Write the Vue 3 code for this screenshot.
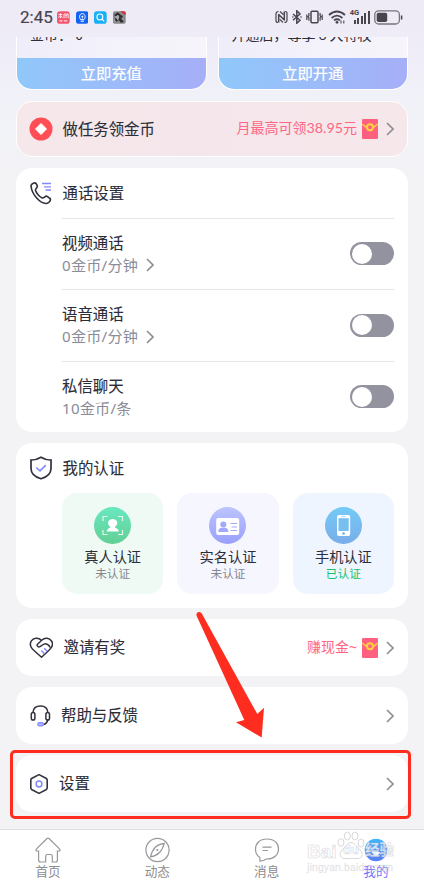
<script setup>
const rates = [
  { name: '视频通话', price: '0金币/分钟', arrow: true },
  { name: '语音通话', price: '0金币/分钟', arrow: true },
  { name: '私信聊天', price: '10金币/条', arrow: false },
]
const signalBars = [4, 6, 8, 11, 13]
</script>

<template>
  <div class="phone">
    <header class="status">
      <span class="time">2:45</span>
      <div class="apps">
        <svg class="app" viewBox="0 0 13 13"><rect width="13" height="13" rx="3" fill="#f4546f" /><path d="M1.500 3.500h4M3.500 2.200v5M1.600 6.800l1-1.800M5.400 6.800l-1-1.800M7.200 3h4.200v4.300M7.200 3v4.300M8.400 4.600h2M8.600 6.200h1.700" fill="none" stroke="#fff" stroke-width=".9" /><path d="M2.500 10h3.200M7 10h3.500" stroke="#fff" stroke-width="1" /></svg>
        <svg class="app" viewBox="0 0 13 13"><rect width="13" height="13" rx="3" fill="#1263f5" /><path d="M4.800 8.700C2.600 6 3.800 2.500 6.500 2.500s3.900 3.500 1.700 6.200zM4.800 10.300h3.400" fill="none" stroke="#fff" stroke-width="1" /><path d="M6.500 4.600v3M5.500 5.600h2" stroke="#fff" stroke-width=".9" /></svg>
        <svg class="app" viewBox="0 0 13 13"><rect width="13" height="13" rx="3" fill="#18aef8" /><circle cx="6" cy="6" r="3" fill="none" stroke="#fff" stroke-width="1.100" /><path d="M8.200 8.200 10.500 10.500" stroke="#fff" stroke-width="1.200" /></svg>
        <svg class="app" viewBox="0 0 13 13"><rect width="13" height="13" rx="2" fill="#8a8a8a" /><path d="M1 4l4-3 3 3 2 1-1 3 2 3-3 1-2-3-3 2-1-3 2-2z" fill="#302e30" /><path d="M3 6l2-2 1 2-1 3zM1 9l2 2M8 7l2 2" fill="#aaa" stroke="#ddd" stroke-width=".5" /><path d="M7.500 0H11a2 2 0 0 1 2 2v2L11 3z" fill="#d92c37" /></svg>
      </div>
      <div class="system">
        <svg width="13" height="14" viewBox="0 0 13 14"><path d="M3.700 12.500V4.500L9.300 10V1.500" fill="none" stroke="#48454d" stroke-width="1.500" stroke-linejoin="round" /><path d="M3.500 1.500Q1 1.500 1 4V10.500Q1 12.500 3 12.500M5 1.500L8.500 4.700M4.800 9.300L8 12.500M9.500 12.500Q12 12.500 12 10V3.500Q12 1.500 10 1.500" fill="none" stroke="#48454d" stroke-width="1.200" /></svg>
        <svg width="10" height="14" viewBox="0 0 10 14"><path d="M1 4l7 6.200-3.200 3V.8L8 4 1 10.200" fill="none" stroke="#48454d" stroke-width="1.500" /><circle cx=".9" cy="7" r=".8" fill="#48454d" /><circle cx="9" cy="7" r=".8" fill="#48454d" /></svg>
        <svg width="17" height="14" viewBox="0 0 17 14"><rect x="5" y="1.200" width="7" height="11.600" rx="1" fill="none" stroke="#48454d" stroke-width="1.500" /><path d="M2.900 3v2.500l-.7 1 .7 1.200v3M14.100 3v2.500l.7 1-.7 1.200v3M.8 4.500v2l.5.500-.5.500V10M16.200 4.500v2l-.5.500.5.500V10" fill="none" stroke="#48454d" stroke-width="1.200" /></svg>
        <svg width="18" height="14" viewBox="0 0 18 14"><path d="M1 5q8-7 16 0M3.600 8q5.400-4.700 10.800 0M6 10.400q3-2.400 6 0" fill="none" stroke="#48454d" stroke-width="1.800" /><circle cx="9" cy="12.300" r="1.400" fill="#48454d" /><path d="M13 10.500v3M15.800 10.500v3" stroke="#48454d" stroke-width="1.100" /></svg>
        <div class="signal">
          <span class="gen">4G</span>
          <i v-for="h in signalBars" :key="h" class="bar" :style="{ height: h + 'px' }"></i>
        </div>
        <svg width="29" height="15" viewBox="0 0 29 15"><rect x=".8" y=".8" width="24.600" height="13.200" rx="3.800" fill="none" stroke="#77747c" stroke-width="1.300" /><rect x="2.700" y="2.700" width="10.500" height="9.400" rx="1.800" fill="#48454d" /><path d="M27.600 5.500v4" stroke="#48454d" stroke-width="1.500" /></svg>
      </div>
    </header>

    <main class="content">
      <section class="wallets">
        <div class="wallet"><p class="wallet-info">金币：&nbsp;0</p><button class="wallet-btn">立即充值</button></div>
        <div class="wallet"><p class="wallet-info">开通后，尊享 8 大特权</p><button class="wallet-btn">立即开通</button></div>
      </section>

      <section class="card row task">
        <svg class="lead" width="24" height="24" viewBox="0 0 24 24"><circle cx="12" cy="12" r="11.500" fill="#ff4e55" /><path d="M12 6.500 17.500 12 12 17.500 6.500 12z" fill="#fff" stroke="#fff" stroke-linejoin="round" /></svg>
        <span class="title">做任务领金币</span>
        <span class="promo">月最高可领<b class="num">38.95</b>元</span>
        <svg class="packet" viewBox="0 0 16 20"><rect width="16" height="20" rx="1.200" fill="#ff6080" /><path d="M.3 5 4 8h1.500M15.700 5 12 8h-1.500" fill="none" stroke="#ffd23f" stroke-width="1.400" /><circle cx="8" cy="8.300" r="3" fill="none" stroke="#ffd23f" stroke-width="2" /></svg>
        <svg class="chev" viewBox="0 0 8 14"><path d="M1 1l6 6-6 6" /></svg>
      </section>

      <section class="card calls">
        <div class="head">
          <svg class="lead" width="24" height="24" viewBox="0 0 24 24"><path d="M2 4.500C3 2.200 5.500 1.300 7 2.300L8.300 4.800C9 6.300 6.200 7.500 6.500 9.200C7.200 12 10.500 15.800 13.200 17C15 17.600 16 14.800 17.800 15.200L20.400 17C22.800 18.500 20.500 22 17.500 22.500C11.500 23 2.500 13.500 2 4.500Z" fill="none" stroke="#30323d" stroke-width="1.600" /><path d="M13 2.500h9M15 5.800h7M16.500 9H22" stroke="#8388ff" stroke-width="1.300" /></svg>
          <span class="title">通话设置</span>
        </div>
        <div v-for="r in rates" :key="r.name" class="rate">
          <div class="rate-text">
            <span class="title">{{ r.name }}</span>
            <span class="price">{{ r.price }}<svg v-if="r.arrow" class="chev small" viewBox="0 0 8 14"><path d="M1 1l6 6-6 6" /></svg></span>
          </div>
          <div class="toggle"><i class="knob"></i></div>
        </div>
      </section>

      <section class="card auth">
        <div class="head">
          <svg class="lead" width="24" height="24" viewBox="0 0 24 24"><path d="M12 1.200Q7 4.200 2 4V12.500C2 18 7 21.300 12 22.800C17 21.300 22 18 22 12.500V4Q17 4.200 12 1.200Z" fill="none" stroke="#30323d" stroke-width="1.700" /><path d="M7.200 11.500 11 14.800 16.800 9.200" fill="none" stroke="#8388ff" stroke-width="1.600" /></svg>
          <span class="title">我的认证</span>
        </div>
        <div class="badges">
          <div class="badge green">
            <svg class="disc" viewBox="0 0 37 37"><defs><linearGradient id="dg" x2="0" y2="1"><stop stop-color="#68e8c0" /><stop offset="1" stop-color="#62cf94" /></linearGradient></defs><circle cx="18.500" cy="18.500" r="18.500" fill="url(#dg)" /><path d="M9 14V9.500h4.500M24 9.500h4.500V14M28.500 23v4.500H24M13.500 27.500H9V23" fill="none" stroke="#fff" stroke-opacity=".8" stroke-width="1.200" /><path d="M16.600 20C11.800 16.500 14.500 11.900 18.700 11.900S25.500 16.500 20.800 20C21 21 24.700 21.500 24.700 24.500H12.700C12.700 21.500 16.500 21 16.600 20Z" fill="#fff" /></svg>
            <span class="badge-name">真人认证</span><span class="badge-state">未认证</span>
          </div>
          <div class="badge violet">
            <svg class="disc" viewBox="0 0 37 37"><defs><linearGradient id="dv" x2="0" y2="1"><stop stop-color="#bcc4ff" /><stop offset="1" stop-color="#9aa0fb" /></linearGradient></defs><circle cx="18.500" cy="18.500" r="18.500" fill="url(#dv)" /><rect x="7.200" y="11" width="23" height="17" rx="2" fill="#fff" /><circle cx="14.300" cy="17.500" r="3" fill="#a2a9fd" /><path d="M9.300 25c0-4 2-4.300 5-4.300s5 .3 5 4.300z" fill="#a2a9fd" /><path d="M21.500 16.500H28M22.500 20H28M21.500 23.500H28" stroke="#a2a9fd" stroke-width="1" /></svg>
            <span class="badge-name">实名认证</span><span class="badge-state">未认证</span>
          </div>
          <div class="badge blue">
            <svg class="disc" viewBox="0 0 37 37"><defs><linearGradient id="db" x2="0" y2="1"><stop stop-color="#74caf6" /><stop offset="1" stop-color="#79ade9" /></linearGradient></defs><circle cx="18.500" cy="18.500" r="18.500" fill="url(#db)" /><rect x="12" y="8" width="13.200" height="21" rx="2" fill="#fff" /><rect x="13.500" y="11.200" width="10.200" height="12.800" fill="#77bff0" /><path d="M16.500 9.600h4" stroke="#9accf1" stroke-width=".8" /><circle cx="18.600" cy="26.500" r="1.300" fill="#67acec" /></svg>
            <span class="badge-name">手机认证</span><span class="badge-state ok">已认证</span>
          </div>
        </div>
      </section>

      <section class="card row invite">
        <svg class="lead" width="24" height="24" viewBox="0 0 24 24"><path d="M12.500 4.300C9 .8 4.200 1.900 2.200 5.200C.2 8.700 2 12 5.300 14.800L12.500 21.300L20 14.300C23.500 11.200 24.500 8 22.500 5C20.500 1.900 15.800 1.200 13 4L8.500 8.200C7.500 9.300 8.700 11.300 10.500 10.800C13.200 9.900 14.500 7.300 16.500 7.700C18.500 8 20.500 10 21.300 11.500" fill="none" stroke="#30323d" stroke-width="1.500" stroke-linejoin="round" /><path d="M12.300 14.500l3 3M15.200 12.300l3 3" stroke="#8388ff" stroke-width="1.400" /></svg>
        <span class="title">邀请有奖</span>
        <span class="promo">赚现金~</span>
        <svg class="packet" viewBox="0 0 16 20"><rect width="16" height="20" rx="1.200" fill="#ff6080" /><path d="M.3 5 4 8h1.500M15.700 5 12 8h-1.500" fill="none" stroke="#ffd23f" stroke-width="1.400" /><circle cx="8" cy="8.300" r="3" fill="none" stroke="#ffd23f" stroke-width="2" /></svg>
        <svg class="chev" viewBox="0 0 8 14"><path d="M1 1l6 6-6 6" /></svg>
      </section>

      <section class="card row help">
        <svg class="lead" width="22" height="24" viewBox="0 0 22 24"><path d="M4 8.500C4.200 4 7 2 11.500 2S18.500 4 18.900 8.500M18.900 15.500Q18 19.800 14.300 20.500" fill="none" stroke="#30323d" stroke-width="1.500" /><rect x="2.300" y="8.500" width="3.600" height="7.500" rx="1.800" fill="none" stroke="#30323d" stroke-width="1.500" /><rect x="16.900" y="8.500" width="3.600" height="7.500" rx="1.800" fill="none" stroke="#30323d" stroke-width="1.500" /><rect x="8.800" y="18.700" width="5.500" height="3.200" rx="1.600" fill="#b4b8ff" stroke="#8388ff" stroke-width="1.200" /></svg>
        <span class="title">帮助与反馈</span>
        <svg class="chev" viewBox="0 0 8 14"><path d="M1 1l6 6-6 6" /></svg>
      </section>

      <section class="card row settings">
        <svg class="lead" width="20" height="24" viewBox="0 0 20 24"><path d="M10 2.600 17 6.300Q18.200 7 18.200 8.200V15.800Q18.200 17 17 17.700L10 21.400 3 17.700Q1.800 17 1.800 15.800V8.200Q1.800 7 3 6.300Z" fill="none" stroke="#30323d" stroke-width="1.600" stroke-linejoin="round" /><circle cx="10" cy="12" r="2.900" fill="none" stroke="#8388ff" stroke-width="1.500" /></svg>
        <span class="title">设置</span>
        <svg class="chev" viewBox="0 0 8 14"><path d="M1 1l6 6-6 6" /></svg>
      </section>
    </main>

    <nav class="tabs">
      <a class="tab"><svg class="tab-icon" viewBox="0 0 28 28"><path d="M14 2.200Q14.700 2.200 15.500 3L25.500 12.800Q27 15 24.500 15H23.400V24Q23.400 26 21.400 26H18.300V20.200Q18.300 18.500 16.700 18.500H13.300Q11.700 18.500 11.700 20.200V26H6.600Q4.600 26 4.600 24V15H3.500Q1 15 2.500 12.800L12.500 3Q13.300 2.200 14 2.200Z" /></svg>首页</a>
      <a class="tab"><svg class="tab-icon" viewBox="0 0 28 28"><circle cx="14.500" cy="14" r="11.600" /><path d="M21.300 7.300Q19.500 13.500 16.500 16.500Q13 20 7.500 20.800Q9 14.500 12.500 11Q16 7.800 21.300 7.300Z" /><circle cx="14.400" cy="14" r=".5" /></svg>动态</a>
      <a class="tab"><svg class="tab-icon" viewBox="0 0 28 28"><path d="M14 3C6.500 3 2.500 7.500 2.500 13.200C2.500 17 4.200 19.700 6.800 21.500L7 25.200Q10.500 24.800 13.500 23C21 23.200 25.500 18.800 25.500 13S21.500 3 14 3Z" /><path d="M9.500 11.200h9M9.500 14.500h5.500" /></svg>消息</a>
      <a class="tab active"><svg class="tab-icon" viewBox="0 0 28 28"><defs><linearGradient id="me" x2="0" y2="1"><stop stop-color="#42b6fb" /><stop offset="1" stop-color="#597df8" /></linearGradient></defs><circle cx="14" cy="14" r="11.300" fill="url(#me)" stroke="none" /><path d="M9.500 16q4.500 7 9 0z" fill="#fff" stroke="none" /></svg>我的</a>
    </nav>

    <div class="mark">
      <svg class="paw" width="28" height="30" viewBox="0 0 28 30"><ellipse cx="4" cy="11.500" rx="3" ry="3.800" /><ellipse cx="10.300" cy="5" rx="3" ry="4" /><ellipse cx="18" cy="5" rx="3" ry="4" /><ellipse cx="24" cy="12" rx="3" ry="4" /><path d="M14 11.500C10 11.500 9 16 5 19C1 23 4 28 8 27.500H20C25 28 27 23 23 19C19 16 18 11.500 14 11.500Z" /></svg>
      <span class="mark-bai">Bai</span><span class="mark-du">du</span><span class="mark-jy">经验</span>
      <span class="mark-url">jingyan.baidu.com</span>
    </div>
    <div class="focus"></div>
    <svg class="pointer" width="70" height="130" viewBox="0 0 70 130"><path d="M.6 4.800Q-.2 1.700 2.500 1Q4.700.6 5.900 2.800L61.300 103 68 96.700 65.700 126.500 40 111.300 48.300 109Z" fill="#fe2d20" /></svg>
  </div>
</template>

<style>
body { background: #f3f3f6; overflow: hidden; }
</style>

<style scoped>
.phone { position: relative; width: 424px; height: 885px; display: flex; flex-direction: column; overflow: hidden; font-family: "Noto Sans", "Noto Sans CJK SC", sans-serif; color: #2b2d38; background: linear-gradient(180deg, #eeeaf6 0, #efedf8 50px, #f1f2f8 110px, #f3f3f6 180px); }
.status { flex: none; height: 37px; box-sizing: border-box; padding: 0 21px 3px 20px; display: flex; align-items: center; }
.time { width: 37px; font: 400 17px/20px Roboto, sans-serif; color: #48454d; -webkit-text-stroke: .2px; }
.apps { display: flex; gap: 6px; }
.app { display: block; width: 12.700px; height: 13px; }
.system { margin-left: auto; display: flex; align-items: center; gap: 4.200px; }
.system svg { display: block; }
.signal { position: relative; width: 20px; height: 14px; display: flex; align-items: flex-end; justify-content: flex-end; gap: 1.500px; }
.bar { width: 2px; background: #48454d; }
.gen { position: absolute; left: 0; top: -1px; font: 700 7.500px/8px Roboto, sans-serif; color: #48454d; }
.content { flex: 1; min-height: 0; padding: 0 16px; }
.wallets { display: grid; grid-template-columns: 1fr 1fr; gap: 11px; height: 52.500px; overflow: hidden; margin-bottom: 11.500px; }
.wallet { box-sizing: border-box; height: 52.500px; border: 1px solid #fff; border-top: 0; border-radius: 0 0 16px 16px; overflow: hidden; background: linear-gradient(90deg, #efedf9, #f7f5fb); display: flex; flex-direction: column; justify-content: flex-end; }
.wallet-info { flex: none; margin: 0 0 13px; height: 22px; line-height: 22px; padding-left: 13px; font-size: 14px; font-family: "Noto Sans CJK SC", sans-serif; white-space: nowrap; }
.wallet-btn { flex: none; height: 31px; border: 0; padding: 0 0 2px; background: linear-gradient(90deg, #90c8fa, #a6aff8); color: #fff; font: 400 15.300px/29px "Noto Sans CJK SC", sans-serif; -webkit-text-stroke: .2px; }
.card { box-sizing: border-box; background: #fff; border-radius: 16px; margin-bottom: 11px; }
.row { height: 57px; display: flex; align-items: center; padding: 0 14px 0 13px; }
.task { height: 56px; border: 1px solid #fff; padding: 0 13px 0 12px; margin-bottom: 10.500px; background: linear-gradient(90deg, #f6e7ea, #f4e6ea 45%, #f5e7ea); }
.lead { flex: none; display: block; }
.title { font-size: 15.400px; line-height: 22px; -webkit-text-stroke: .1px; white-space: nowrap; font-family: "Noto Sans CJK SC", sans-serif; }
.row .title { margin-left: 9.500px; padding-bottom: 3px; }
.head .title { padding-bottom: 2px; }
.invite .title { margin-left: 10.500px; }
.promo { margin-left: auto; padding-bottom: 2px; color: #ff6683; font-size: 14px; line-height: 20px; white-space: nowrap; }
.num { font: 400 14.300px/20px Lato, sans-serif; }
.packet { width: 16px; height: 20px; margin-left: 5px; flex: none; }
.chev { width: 8px; height: 14px; margin-left: 8px; flex: none; }
.chev path { fill: none; stroke: #8d8d92; stroke-width: 1.600; }
.help .chev, .settings .chev { margin-left: auto; }
.calls { height: 264.500px; padding: 13px 14px 0 13px; margin-bottom: 10.500px; }
.head { height: 24px; display: flex; align-items: center; gap: 9.500px; }
.rate { margin-left: 33px; height: 71.500px; box-sizing: border-box; border-top: 1px solid #e5e5e8; display: flex; justify-content: space-between; align-items: center; }
.head + .rate { margin-top: 13px; }
.rate-text { display: flex; flex-direction: column; }
.price { display: flex; align-items: center; font-size: 15.100px; letter-spacing: .25px; line-height: 23px; padding-top: 1px; color: #8b8c98; font-family: "Noto Sans", "Noto Sans CJK SC", sans-serif; }
.toggle { box-sizing: border-box; width: 44px; height: 23px; border-radius: 12px; background: #9393a0; padding: 1.500px; }
.knob { display: block; width: 20px; height: 20px; border-radius: 50%; background: #fff; }
.auth { height: 165.500px; padding: 13px 14px 0 13px; }
.badges { margin: 13px 0 0 33px; display: grid; grid-template-columns: repeat(3, 1fr); gap: 14px; }
.badge { height: 101px; box-sizing: border-box; border-radius: 15px; padding-top: 14px; display: flex; flex-direction: column; align-items: center; }
.green { background: #effaf4; }
.violet { background: #f6f6ff; }
.blue { background: #eef5fe; }
.disc { width: 37px; height: 37px; }
.badge-name { font: 14.200px/20px "Noto Sans CJK SC", sans-serif; margin-top: 2px; }
.badge-state { font: 11.700px/14px "Noto Sans CJK SC", sans-serif; color: #85868f; }
.ok { color: #14c26b; }
.help .title { margin-left: 10px; }
.settings .title { margin-left: 10px; }
.tabs { flex: none; height: 56px; box-sizing: border-box; border-top: 1px solid #dedee3; background: #fff; display: grid; grid-template-columns: repeat(4, 109.300px); justify-content: center; }
.tab { display: flex; flex-direction: column; align-items: center; padding-top: 6px; font: 12.600px/14px "Noto Sans CJK SC", sans-serif; color: #8c8c91; }
.tab-icon { width: 28px; height: 28px; fill: none; stroke: #97979c; stroke-width: 1.200; }
.active { color: #7277fa; }
.mark { position: absolute; left: 307px; top: 831px; width: 92px; height: 44px; color: rgba(255,255,255,.75); font-family: "Liberation Sans", "Noto Sans CJK SC", sans-serif; font-weight: 700; -webkit-text-stroke: .6px rgba(190,190,197,.6); }
.mark span { position: absolute; line-height: 20px; }
.paw { position: absolute; left: 30px; top: 0; fill: rgba(255,255,255,.7); stroke: rgba(190,190,197,.6); stroke-width: 1; }
.mark-bai { left: 0; top: 11px; font-size: 19px; }
.mark-du { left: 36px; top: 9px; font-size: 13px; }
.mark-jy { left: 58px; top: 9px; font-size: 14.500px; white-space: nowrap; }
.mark .mark-url { left: 0; top: 27px; font-size: 10.300px; letter-spacing: .2px; font-weight: 400; color: rgba(205,205,210,.4); -webkit-text-stroke: .4px rgba(205,205,210,.4); }
.focus { position: absolute; box-sizing: border-box; left: 9.500px; top: 750px; width: 401.500px; height: 69px; border: 3px solid #fe2d20; border-radius: 5px; }
.pointer { position: absolute; left: 196px; top: 611px; }
</style>
